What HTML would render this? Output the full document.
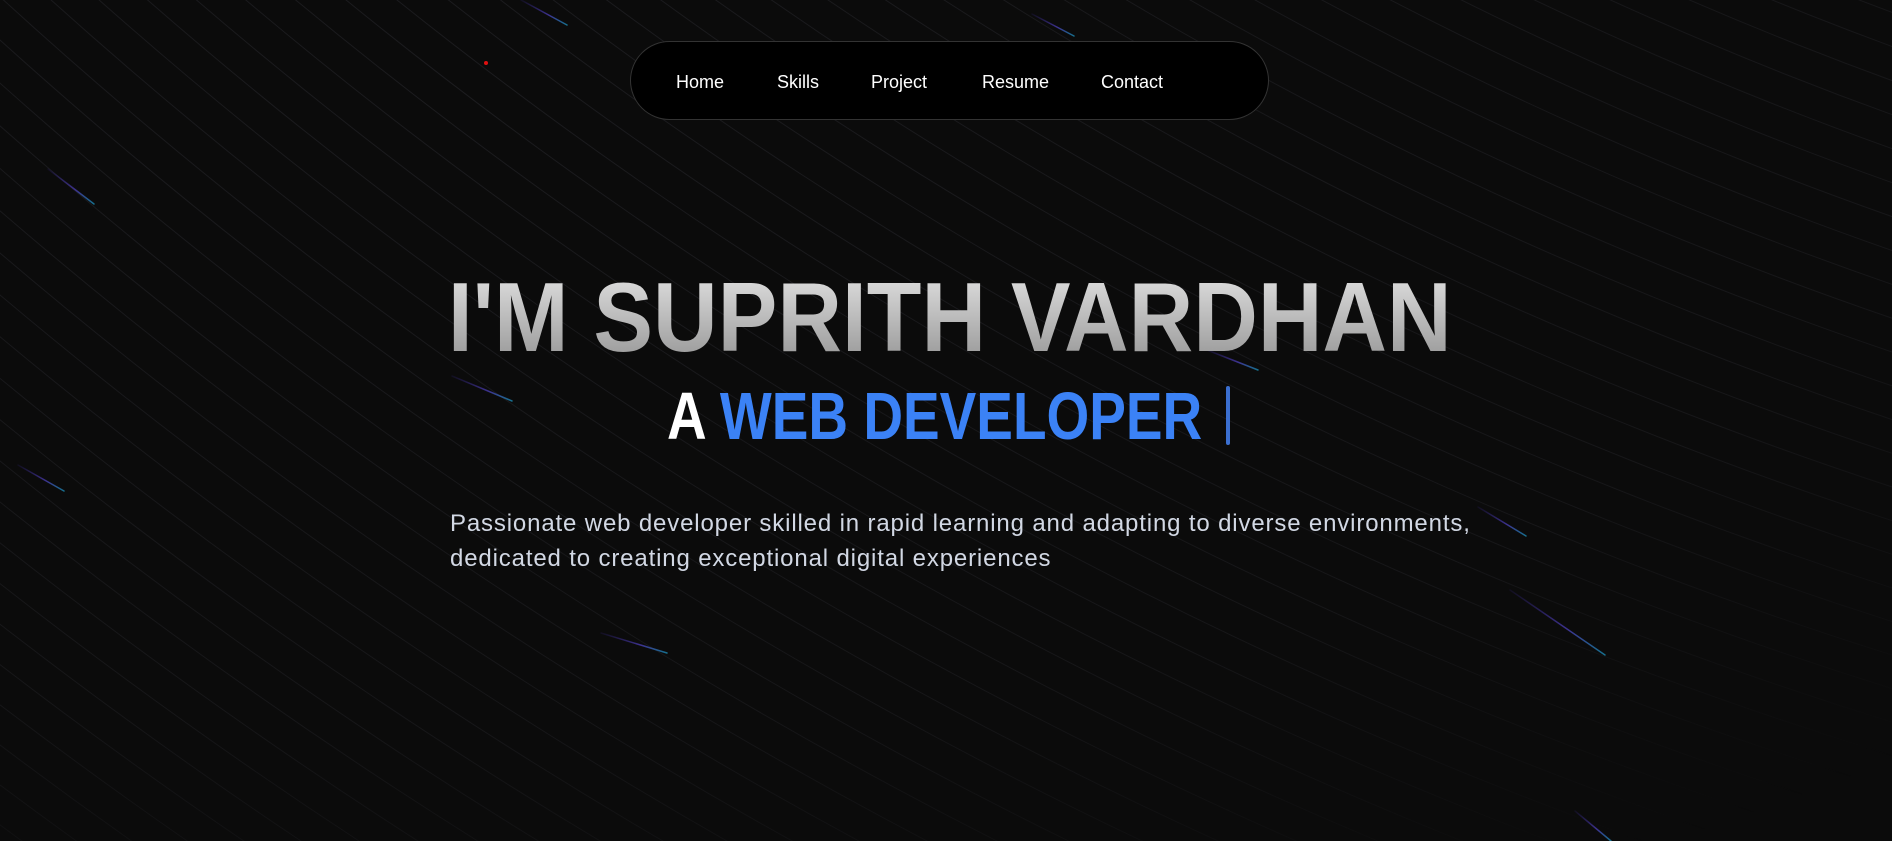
<!DOCTYPE html>
<html><head><meta charset="utf-8"><style>
html,body{margin:0;padding:0;background:#0b0b0b;width:1892px;height:841px;overflow:hidden;}
body{position:relative;font-family:"Liberation Sans",sans-serif;}
svg.bg{position:absolute;left:0;top:0;}
.nav{position:absolute;left:630px;top:41px;width:639px;height:79px;border:1px solid #333;border-radius:40px;background:#000;box-sizing:border-box;}
.nav span{position:absolute;top:30px;color:#fff;font-size:18px;font-weight:500;line-height:20px;}
.h1{position:absolute;left:0;width:1892px;top:262px;text-align:center;}
.h1 span{display:inline-block;font-size:98px;font-weight:bold;line-height:110px;transform:scaleX(0.913);background:linear-gradient(#d6d6d6 20%,#9d9d9d 85%);-webkit-background-clip:text;background-clip:text;color:transparent;margin-left:8px;}
.h2{position:absolute;left:667px;top:377px;font-size:67px;font-weight:bold;line-height:80px;white-space:nowrap;transform:scaleX(0.82);transform-origin:left top;}
.cursor{position:absolute;left:1226px;top:386px;width:4px;height:59px;background:#3b6fd0;border-radius:2px;}
.p{position:absolute;left:450px;top:506px;font-size:24px;letter-spacing:0.85px;line-height:35px;color:#d2d8e4;font-weight:300;white-space:nowrap;}
</style></head><body>
<svg class="bg" width="1892" height="841">
<defs>
<radialGradient id="fade" cx="0.25" cy="0.1" r="1.1">
<stop offset="0" stop-color="#fff"/><stop offset="0.7" stop-color="#fff" stop-opacity="0.7"/><stop offset="1" stop-color="#fff" stop-opacity="0"/>
</radialGradient>
<mask id="m"><rect width="1892" height="841" fill="url(#fade)"/></mask>
<linearGradient id="st" x1="0" y1="0" x2="1" y2="1"><stop offset="0" stop-color="#3a2a90" stop-opacity="0.2"/><stop offset="0.6" stop-color="#4a3cb0"/><stop offset="1" stop-color="#1b8ab0"/></linearGradient>
</defs>
<g id="arcs" fill="none" stroke="#1c1c1f" stroke-width="1" mask="url(#m)"></g>
<g stroke="url(#st)" stroke-width="1.5" stroke-linecap="round" opacity="0.8">
<line x1="521" y1="0" x2="567" y2="25"/>
<line x1="1032" y1="14" x2="1074" y2="36"/>
<line x1="48" y1="169" x2="94" y2="204"/>
<line x1="452" y1="376" x2="512" y2="401"/>
<line x1="18" y1="465" x2="64" y2="491"/>
<line x1="1207" y1="350" x2="1258" y2="370"/>
<line x1="1478" y1="507" x2="1526" y2="536"/>
<line x1="601" y1="633" x2="667" y2="653"/>
<line x1="1510" y1="590" x2="1605" y2="655"/>
<line x1="1575" y1="811" x2="1611" y2="841"/>
</g>
<circle cx="486" cy="63" r="2" fill="#e01010"/>
</svg>
<script>
var g=document.getElementById('arcs'),s='';
for(var r=3300;r<5600;r+=32){s+='<circle cx="3200" cy="-3500" r="'+r+'"/>';}
g.innerHTML=s;
</script>
<div class="nav">
<span style="left:45px">Home</span>
<span style="left:146px">Skills</span>
<span style="left:240px">Project</span>
<span style="left:351px">Resume</span>
<span style="left:470px">Contact</span>
</div>
<div class="h1"><span>I'M SUPRITH VARDHAN</span></div>
<div class="h2"><span style="color:#fff">A </span><span style="color:#3b82f6">WEB DEVELOPER</span></div>
<div class="cursor"></div>
<div class="p">Passionate web developer skilled in rapid learning and adapting to diverse environments,<br>dedicated to creating exceptional digital experiences</div>
</body></html>
